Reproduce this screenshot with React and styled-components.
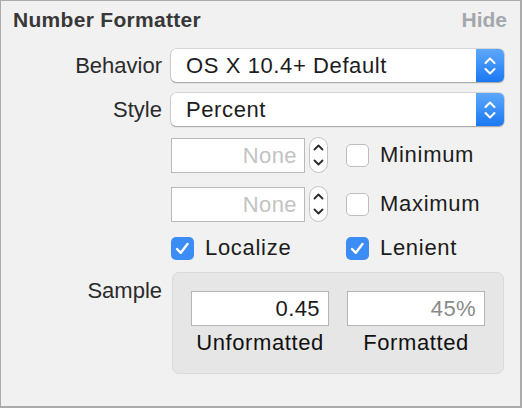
import styled, { createGlobalStyle } from "styled-components";

const GlobalStyle = createGlobalStyle`
  html, body {
    margin: 0;
    padding: 0;
    background: #f1f1f1;
  }
  body {
    font-family: "Liberation Sans", Arial, sans-serif;
  }
`;

const Panel = styled.div`
  box-sizing: border-box;
  width: 522px;
  height: 408px;
  background: #f1f1f1;
  border-style: solid;
  border-color: #ababab;
  border-width: 1px 2px 2px 1px;
  font-family: "Liberation Sans", Arial, sans-serif;
  font-size: 22px;
  color: #222;
`;

const Header = styled.div`
  display: flex;
  justify-content: space-between;
  align-items: baseline;
  height: 24px;
  line-height: 24px;
  padding: 7px 13px 0 12px;
  font-size: 21px;
  font-weight: 700;
`;

const Title = styled.span`
  color: #383838;
  letter-spacing: 0.3px;
`;

const HideLink = styled.span`
  color: #a4a8ad;
`;

const Form = styled.div`
  display: flex;
  flex-direction: column;
  margin-top: 17px;
`;

const Row = styled.div`
  display: grid;
  grid-template-columns: 161px 333px;
  column-gap: 9px;
  align-items: ${(p) => (p.$top ? "start" : "center")};
  margin-top: ${(p) => p.$gap || 0}px;
`;

const Label = styled.div`
  text-align: right;
  line-height: 24px;
  color: #2b2b2b;
  padding-top: ${(p) => p.$pad || 0}px;
`;

const Popup = styled.div`
  display: flex;
  height: 33px;
  background: #fff;
  border-radius: 5px;
  box-shadow: 0 0 0 0.5px rgba(0, 0, 0, 0.22), 0 1px 1.5px rgba(0, 0, 0, 0.25);
`;

const PopupText = styled.div`
  flex: 1;
  padding-left: 15px;
  line-height: 33px;
  letter-spacing: 0.6px;
  color: #1c1c1c;
`;

const PopupArrows = styled.div`
  width: 28px;
  display: flex;
  align-items: center;
  justify-content: center;
  border-radius: 0 5px 5px 0;
  background: linear-gradient(#5ea8fb, #1a78f3);
`;

const Controls = styled.div`
  display: flex;
  align-items: center;
`;

const NumberField = styled.div`
  box-sizing: border-box;
  width: 134px;
  height: 35px;
  line-height: 33px;
  padding-right: 7px;
  text-align: right;
  letter-spacing: 0.4px;
  background: #fff;
  border: 1px solid #b9b9b9;
  color: #c3c3c3;
`;

const Stepper = styled.div`
  box-sizing: border-box;
  width: 19px;
  height: 36px;
  margin-left: 4px;
  display: flex;
  align-items: center;
  justify-content: center;
  background: #fff;
  border: 1px solid #c3c3c3;
  border-radius: 10px;
`;

const CheckItem = styled.div`
  display: flex;
  align-items: center;
  gap: 11px;
  margin-left: ${(p) => p.$offset || 0}px;
  line-height: 24px;
  letter-spacing: 0.7px;
  color: #1c1c1c;
`;

const Box = styled.div`
  box-sizing: border-box;
  width: 23px;
  height: 23px;
  border-radius: 5px;
  display: flex;
  align-items: center;
  justify-content: center;
  background: ${(p) => (p.$checked ? "#3b8cf5" : "#fff")};
  border: ${(p) => (p.$checked ? "none" : "1px solid #bdbdbd")};
`;

const CheckRow = styled.div`
  display: grid;
  grid-template-columns: 175px auto;
`;

const Group = styled.div`
  box-sizing: border-box;
  height: 102px;
  margin-left: 1px;
  padding: 18px 18px 0;
  display: grid;
  grid-template-columns: 1fr 1fr;
  column-gap: 18px;
  background: #e6e6e6;
  border: 1px solid #dadada;
  border-radius: 7px;
`;

const SampleField = styled.div`
  box-sizing: border-box;
  height: 35px;
  line-height: 33px;
  padding-right: 8px;
  text-align: right;
  letter-spacing: 0.4px;
  background: #fff;
  border: 1px solid #b5b5b5;
  color: ${(p) => p.$color};
`;

const Caption = styled.div`
  margin-top: 5px;
  text-align: center;
  line-height: 24px;
  letter-spacing: 0.6px;
  color: #111;
`;

const PopupChevrons = () => (
  <svg width="12" height="20" viewBox="0 0 12 20">
    <path
      d="M1.5 7 L6 2.5 L10.5 7 M1.5 13 L6 17.5 L10.5 13"
      fill="none"
      stroke="#fff"
      strokeWidth="2"
      strokeLinecap="round"
      strokeLinejoin="round"
    />
  </svg>
);

const StepperChevrons = () => (
  <svg width="11" height="24" viewBox="0 0 11 24">
    <path
      d="M1.5 6.5 L5.5 2.5 L9.5 6.5 M1.5 17.5 L5.5 21.5 L9.5 17.5"
      fill="none"
      stroke="#2a2a2a"
      strokeWidth="1.8"
      strokeLinecap="round"
      strokeLinejoin="round"
    />
  </svg>
);

const CheckMark = () => (
  <svg width="23" height="23" viewBox="0 0 23 23">
    <path
      d="M6 12 L9.8 15.8 L16.5 7"
      fill="none"
      stroke="#fff"
      strokeWidth="2.4"
      strokeLinecap="round"
      strokeLinejoin="round"
    />
  </svg>
);

const Checkbox = ({ checked, label, offset }) => (
  <CheckItem $offset={offset}>
    <Box $checked={checked}>{checked && <CheckMark />}</Box>
    {label}
  </CheckItem>
);

const PopupButton = ({ value }) => (
  <Popup>
    <PopupText>{value}</PopupText>
    <PopupArrows>
      <PopupChevrons />
    </PopupArrows>
  </Popup>
);

const LimitRow = ({ gap, label }) => (
  <Row $gap={gap}>
    <span />
    <Controls>
      <NumberField>None</NumberField>
      <Stepper>
        <StepperChevrons />
      </Stepper>
      <Checkbox label={label} offset={18} />
    </Controls>
  </Row>
);

export default function App() {
  return (
    <>
      <GlobalStyle />
      <Panel>
        <Header>
          <Title>Number Formatter</Title>
          <HideLink>Hide</HideLink>
        </Header>
        <Form>
          <Row>
            <Label>Behavior</Label>
            <PopupButton value="OS X 10.4+ Default" />
          </Row>
          <Row $gap={11}>
            <Label>Style</Label>
            <PopupButton value="Percent" />
          </Row>
          <LimitRow gap={11} label="Minimum" />
          <LimitRow gap={13} label="Maximum" />
          <Row $gap={14}>
            <span />
            <CheckRow>
              <Checkbox checked label="Localize" />
              <Checkbox checked label="Lenient" />
            </CheckRow>
          </Row>
          <Row $gap={12} $top>
            <Label $pad={7}>Sample</Label>
            <Group>
              <div>
                <SampleField $color="#1a1a1a">0.45</SampleField>
                <Caption>Unformatted</Caption>
              </div>
              <div>
                <SampleField $color="#8a8a8a">45%</SampleField>
                <Caption>Formatted</Caption>
              </div>
            </Group>
          </Row>
        </Form>
      </Panel>
    </>
  );
}
